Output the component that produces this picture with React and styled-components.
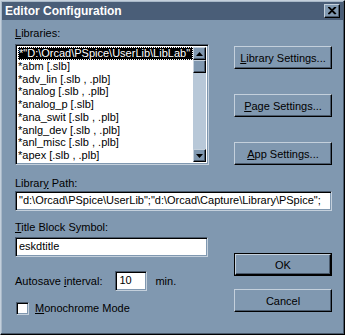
import React from "react";
import styled, { createGlobalStyle, css } from "styled-components";

const FACE = "#8098b0";
const LIGHT = "#c4d0dc";
const DARK = "#4a5a6c";

const Global = createGlobalStyle`
  html, body { margin: 0; padding: 0; background: ${FACE}; }
  body { font-family: "Liberation Sans", Arial, sans-serif; font-size: 11px; color: #000; }
  * { box-sizing: border-box; }
`;

const Window = styled.div`
  width: 345px;
  height: 335px;
  background: ${FACE};
  border: 1px solid;
  border-color: ${LIGHT} #000 #000 ${LIGHT};
  box-shadow: inset -1px -1px 0 ${DARK}, inset 1px 1px 0 #a8b8c8;
  padding: 1px;
  display: flex;
  flex-direction: column;
`;

const TitleBar = styled.div`
  height: 18px;
  background: #4a5e78;
  display: flex;
  align-items: center;
  justify-content: space-between;
  padding: 0 3px 0 3px;
`;

const TitleText = styled.span`
  color: #fff;
  font-weight: bold;
  font-size: 12px;
`;

const raised = css`
  background: ${FACE};
  border: 1px solid;
  border-color: ${LIGHT} #000 #000 ${LIGHT};
  box-shadow: inset -1px -1px 0 ${DARK};
`;

const CloseBtn = styled.div`
  ${raised}
  width: 16px;
  height: 14px;
  display: flex;
  align-items: center;
  justify-content: center;
`;

const Content = styled.div`
  padding: 0 11px 0 13px;
  display: flex;
  flex-direction: column;
`;

const Row = styled.div`
  display: flex;
  align-items: flex-start;
`;

const LeftCol = styled.div`
  display: flex;
  flex-direction: column;
  width: ${(p) => p.$w}px;
`;

const RightCol = styled.div`
  display: flex;
  flex-direction: column;
  margin-left: auto;
  padding-top: ${(p) => p.$top}px;
  gap: ${(p) => p.$gap}px;
`;

const Label = styled.div`
  line-height: 13px;
  height: 13px;
  margin-top: ${(p) => p.$mt || 0}px;
  margin-left: ${(p) => p.$ml || 0}px;
  white-space: nowrap;
`;

const U = styled.span`
  text-decoration: underline;
  text-underline-offset: 1px;
`;

const sunken = css`
  background: #fff;
  border: 1px solid;
  border-color: ${DARK} ${LIGHT} ${LIGHT} ${DARK};
  box-shadow: inset 1px 1px 0 #000, inset -1px -1px 0 ${FACE};
`;

const ListBox = styled.div`
  ${sunken}
  margin-top: 4px;
  height: 121px;
  padding: 2px;
  display: flex;
  overflow: hidden;
`;

const Items = styled.div`
  flex: 1;
  min-width: 0;
  display: flex;
  flex-direction: column;
`;

const Item = styled.div`
  height: 13px;
  line-height: 13px;
  white-space: nowrap;
  overflow: hidden;
  ${(p) =>
    p.$sel &&
    css`
      background: #000;
      color: #fff;
      outline: 1px dotted #fff;
      outline-offset: -1px;
      padding-left: 1px;
    `}
`;

const ScrollBar = styled.div`
  width: 13px;
  background: #b8c8d8;
  display: flex;
  flex-direction: column;
  justify-content: space-between;
`;

const SBBtn = styled.div`
  ${raised}
  width: 13px;
  height: 13px;
  display: flex;
  align-items: center;
  justify-content: center;
`;

const Thumb = styled.div`
  ${raised}
  width: 13px;
  height: 13px;
`;

const SBTop = styled.div`
  display: flex;
  flex-direction: column;
`;

const Button = styled.div`
  ${raised}
  width: 98px;
  height: 23px;
  display: flex;
  align-items: center;
  justify-content: center;
  white-space: nowrap;
  ${(p) =>
    p.$default &&
    css`
      outline: 1px solid #000;
      outline-offset: -1px;
      border-width: 2px;
      box-shadow: inset -1px -1px 0 ${DARK};
    `}
`;

const TextInput = styled.div`
  ${sunken}
  width: ${(p) => (p.$w ? `${p.$w}px` : "auto")};
  height: 20px;
  margin-top: ${(p) => p.$mt || 0}px;
  margin-left: ${(p) => p.$ml || 0}px;
  padding: 0 3px;
  line-height: 16px;
  white-space: nowrap;
  overflow: hidden;
`;

const InlineRow = styled.div`
  display: flex;
  align-items: center;
  margin-top: ${(p) => p.$mt || 0}px;
`;

const Check = styled.div`
  ${sunken}
  width: 13px;
  height: 13px;
  margin: 0 6px 0 1px;
`;

const Arrow = ({ down }) => (
  <svg width="7" height="4" viewBox="0 0 7 4">
    <polygon points={down ? "0,0 7,0 3.5,4" : "0,4 7,4 3.5,0"} fill="#000" />
  </svg>
);

const items = [
  '*"D:\\Orcad\\PSpice\\UserLib\\LibLab"',
  "*abm [.slb]",
  "*adv_lin [.slb , .plb]",
  "*analog [.slb , .plb]",
  "*analog_p [.slb]",
  "*ana_swit [.slb , .plb]",
  "*anlg_dev [.slb , .plb]",
  "*anl_misc [.slb , .plb]",
  "*apex [.slb , .plb]",
];

export default function App() {
  return (
    <>
      <Global />
      <Window>
        <TitleBar>
          <TitleText>Editor Configuration</TitleText>
          <CloseBtn>
            <svg width="9" height="8" viewBox="0 0 9 8">
              <path d="M1 0 L8 7 M0 0 L7 7 M8 0 L1 7 M7 0 L0 7" stroke="#000" strokeWidth="1.2" />
            </svg>
          </CloseBtn>
        </TitleBar>
        <Content>
          <Row>
            <LeftCol $w={194}>
              <Label $mt={7}>
                <U>L</U>ibraries:
              </Label>
              <ListBox>
                <Items>
                  {items.map((t, i) => (
                    <Item key={i} $sel={i === 0}>
                      {t}
                    </Item>
                  ))}
                </Items>
                <ScrollBar>
                  <SBTop>
                    <SBBtn>
                      <Arrow />
                    </SBBtn>
                    <Thumb />
                  </SBTop>
                  <SBBtn>
                    <Arrow down />
                  </SBBtn>
                </ScrollBar>
              </ListBox>
            </LeftCol>
            <RightCol $top={26} $gap={25}>
              <Button>
                <U>L</U>ibrary Settings...
              </Button>
              <Button>
                <U>P</U>age Settings...
              </Button>
              <Button>
                <U>A</U>pp Settings...
              </Button>
            </RightCol>
          </Row>
          <Label $mt={12}>
            Librar<U>y</U> Path:
          </Label>
          <TextInput $mt={1}>
            "d:\Orcad\PSpice\UserLib";"d:\Orcad\Capture\Library\PSpice";
          </TextInput>
          <Row>
            <LeftCol $w={193}>
              <Label $mt={10}>
                <U>T</U>itle Block Symbol:
              </Label>
              <TextInput $mt={3} $w={193}>
                eskdtitle
              </TextInput>
              <InlineRow $mt={14}>
                <Label>
                  Autosave <U>i</U>nterval:
                </Label>
                <TextInput $w={32} $ml={13}>
                  10
                </TextInput>
                <Label $ml={8}>min.</Label>
              </InlineRow>
              <InlineRow $mt={11}>
                <Check />
                <Label>
                  <U>M</U>onochrome Mode
                </Label>
              </InlineRow>
            </LeftCol>
            <RightCol $top={42} $gap={13}>
              <Button $default>OK</Button>
              <Button>Cancel</Button>
            </RightCol>
          </Row>
        </Content>
      </Window>
    </>
  );
}
